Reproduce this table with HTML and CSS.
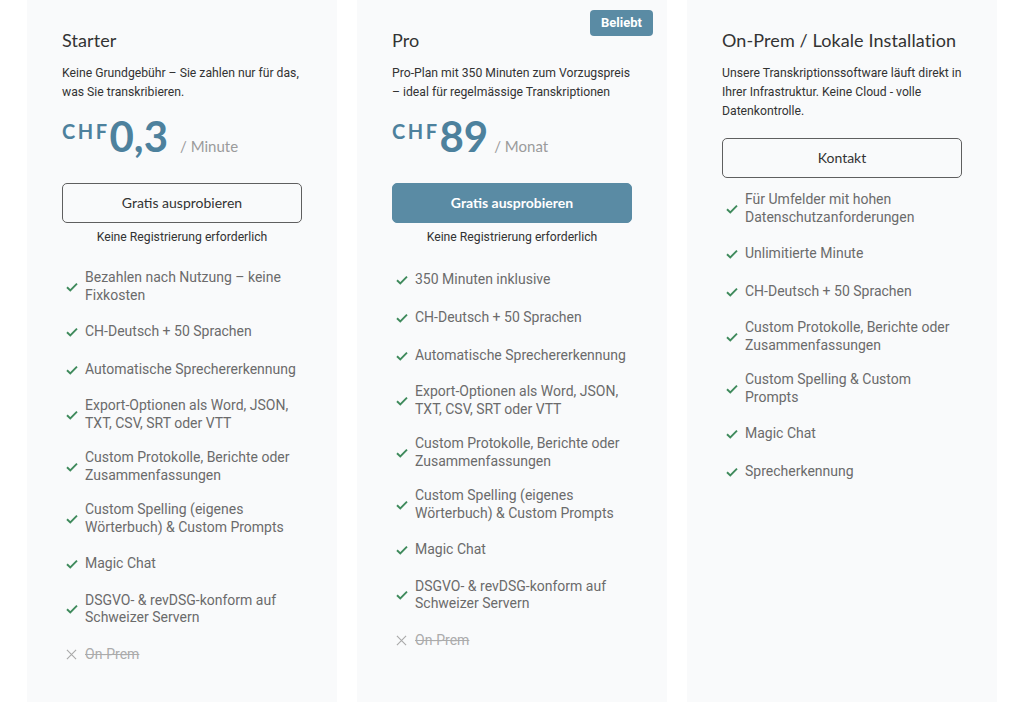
FILE: index.html
```html
<!DOCTYPE html>
<html lang="de">
<head>
<meta charset="utf-8">
<title>Preise</title>
<link rel="stylesheet" href="styles.css">
</head>
<body>
<div class="pricing">
  <section class="card">
    <h2 class="title">Starter</h2>
    <p class="desc">Keine Grundgebühr – Sie zahlen nur für das, was Sie transkribieren.</p>
    <div class="price"><span class="cur">CHF</span><span class="amount">0,3</span><span class="unit">/ Minute</span></div>
    <a class="btn">Gratis ausprobieren</a>
    <p class="note">Keine Registrierung erforderlich</p>
    <ul class="features">
      <li><span class="ico"><svg viewBox="0 0 12 10" width="12" height="10"><polyline points="1,5.2 4.3,8.4 11,1.6" fill="none" stroke="#3f8a5c" stroke-width="1.9"/></svg></span><span>Bezahlen nach Nutzung – keine Fixkosten</span></li>
      <li><span class="ico"><svg viewBox="0 0 12 10" width="12" height="10"><polyline points="1,5.2 4.3,8.4 11,1.6" fill="none" stroke="#3f8a5c" stroke-width="1.9"/></svg></span><span>CH-Deutsch + 50 Sprachen</span></li>
      <li><span class="ico"><svg viewBox="0 0 12 10" width="12" height="10"><polyline points="1,5.2 4.3,8.4 11,1.6" fill="none" stroke="#3f8a5c" stroke-width="1.9"/></svg></span><span>Automatische Sprechererkennung</span></li>
      <li><span class="ico"><svg viewBox="0 0 12 10" width="12" height="10"><polyline points="1,5.2 4.3,8.4 11,1.6" fill="none" stroke="#3f8a5c" stroke-width="1.9"/></svg></span><span>Export-Optionen als Word, JSON, TXT, CSV, SRT oder VTT</span></li>
      <li><span class="ico"><svg viewBox="0 0 12 10" width="12" height="10"><polyline points="1,5.2 4.3,8.4 11,1.6" fill="none" stroke="#3f8a5c" stroke-width="1.9"/></svg></span><span>Custom Protokolle, Berichte oder Zusammenfassungen</span></li>
      <li><span class="ico"><svg viewBox="0 0 12 10" width="12" height="10"><polyline points="1,5.2 4.3,8.4 11,1.6" fill="none" stroke="#3f8a5c" stroke-width="1.9"/></svg></span><span>Custom Spelling (eigenes Wörterbuch) &amp; Custom Prompts</span></li>
      <li><span class="ico"><svg viewBox="0 0 12 10" width="12" height="10"><polyline points="1,5.2 4.3,8.4 11,1.6" fill="none" stroke="#3f8a5c" stroke-width="1.9"/></svg></span><span>Magic Chat</span></li>
      <li><span class="ico"><svg viewBox="0 0 12 10" width="12" height="10"><polyline points="1,5.2 4.3,8.4 11,1.6" fill="none" stroke="#3f8a5c" stroke-width="1.9"/></svg></span><span>DSGVO- &amp; revDSG-konform auf Schweizer Servern</span></li>
      <li class="off"><span class="ico"><svg viewBox="0 0 12 12" width="11" height="11"><path d="M1 1L11 11M11 1L1 11" fill="none" stroke="#a9a9a9" stroke-width="1.2"/></svg></span><span>On-Prem</span></li>
    </ul>
  </section>

  <section class="card">
    <span class="badge">Beliebt</span>
    <h2 class="title">Pro</h2>
    <p class="desc">Pro-Plan mit 350 Minuten zum Vorzugspreis – ideal für regelmässige Transkriptionen</p>
    <div class="price"><span class="cur">CHF</span><span class="amount">89</span><span class="unit unit-tight">/ Monat</span></div>
    <a class="btn btn-primary">Gratis ausprobieren</a>
    <p class="note">Keine Registrierung erforderlich</p>
    <ul class="features">
      <li><span class="ico"><svg viewBox="0 0 12 10" width="12" height="10"><polyline points="1,5.2 4.3,8.4 11,1.6" fill="none" stroke="#3f8a5c" stroke-width="1.9"/></svg></span><span>350 Minuten inklusive</span></li>
      <li><span class="ico"><svg viewBox="0 0 12 10" width="12" height="10"><polyline points="1,5.2 4.3,8.4 11,1.6" fill="none" stroke="#3f8a5c" stroke-width="1.9"/></svg></span><span>CH-Deutsch + 50 Sprachen</span></li>
      <li><span class="ico"><svg viewBox="0 0 12 10" width="12" height="10"><polyline points="1,5.2 4.3,8.4 11,1.6" fill="none" stroke="#3f8a5c" stroke-width="1.9"/></svg></span><span>Automatische Sprechererkennung</span></li>
      <li><span class="ico"><svg viewBox="0 0 12 10" width="12" height="10"><polyline points="1,5.2 4.3,8.4 11,1.6" fill="none" stroke="#3f8a5c" stroke-width="1.9"/></svg></span><span>Export-Optionen als Word, JSON, TXT, CSV, SRT oder VTT</span></li>
      <li><span class="ico"><svg viewBox="0 0 12 10" width="12" height="10"><polyline points="1,5.2 4.3,8.4 11,1.6" fill="none" stroke="#3f8a5c" stroke-width="1.9"/></svg></span><span>Custom Protokolle, Berichte oder Zusammenfassungen</span></li>
      <li><span class="ico"><svg viewBox="0 0 12 10" width="12" height="10"><polyline points="1,5.2 4.3,8.4 11,1.6" fill="none" stroke="#3f8a5c" stroke-width="1.9"/></svg></span><span>Custom Spelling (eigenes Wörterbuch) &amp; Custom Prompts</span></li>
      <li><span class="ico"><svg viewBox="0 0 12 10" width="12" height="10"><polyline points="1,5.2 4.3,8.4 11,1.6" fill="none" stroke="#3f8a5c" stroke-width="1.9"/></svg></span><span>Magic Chat</span></li>
      <li><span class="ico"><svg viewBox="0 0 12 10" width="12" height="10"><polyline points="1,5.2 4.3,8.4 11,1.6" fill="none" stroke="#3f8a5c" stroke-width="1.9"/></svg></span><span>DSGVO- &amp; revDSG-konform auf Schweizer Servern</span></li>
      <li class="off"><span class="ico"><svg viewBox="0 0 12 12" width="11" height="11"><path d="M1 1L11 11M11 1L1 11" fill="none" stroke="#a9a9a9" stroke-width="1.2"/></svg></span><span>On-Prem</span></li>
    </ul>
  </section>

  <section class="card">
    <h2 class="title">On-Prem / Lokale Installation</h2>
    <p class="desc">Unsere Transkriptionssoftware läuft direkt in Ihrer Infrastruktur. Keine Cloud - volle Datenkontrolle.</p>
    <a class="btn btn-solo">Kontakt</a>
    <ul class="features features-solo">
      <li><span class="ico"><svg viewBox="0 0 12 10" width="12" height="10"><polyline points="1,5.2 4.3,8.4 11,1.6" fill="none" stroke="#3f8a5c" stroke-width="1.9"/></svg></span><span>Für Umfelder mit hohen Datenschutzanforderungen</span></li>
      <li><span class="ico"><svg viewBox="0 0 12 10" width="12" height="10"><polyline points="1,5.2 4.3,8.4 11,1.6" fill="none" stroke="#3f8a5c" stroke-width="1.9"/></svg></span><span>Unlimitierte Minute</span></li>
      <li><span class="ico"><svg viewBox="0 0 12 10" width="12" height="10"><polyline points="1,5.2 4.3,8.4 11,1.6" fill="none" stroke="#3f8a5c" stroke-width="1.9"/></svg></span><span>CH-Deutsch + 50 Sprachen</span></li>
      <li><span class="ico"><svg viewBox="0 0 12 10" width="12" height="10"><polyline points="1,5.2 4.3,8.4 11,1.6" fill="none" stroke="#3f8a5c" stroke-width="1.9"/></svg></span><span>Custom Protokolle, Berichte oder Zusammenfassungen</span></li>
      <li><span class="ico"><svg viewBox="0 0 12 10" width="12" height="10"><polyline points="1,5.2 4.3,8.4 11,1.6" fill="none" stroke="#3f8a5c" stroke-width="1.9"/></svg></span><span>Custom Spelling &amp; Custom Prompts</span></li>
      <li><span class="ico"><svg viewBox="0 0 12 10" width="12" height="10"><polyline points="1,5.2 4.3,8.4 11,1.6" fill="none" stroke="#3f8a5c" stroke-width="1.9"/></svg></span><span>Magic Chat</span></li>
      <li><span class="ico"><svg viewBox="0 0 12 10" width="12" height="10"><polyline points="1,5.2 4.3,8.4 11,1.6" fill="none" stroke="#3f8a5c" stroke-width="1.9"/></svg></span><span>Sprecherkennung</span></li>
    </ul>
  </section>
</div>
</body>
</html>
```

FILE: styles.css
```css
html, body {
  margin: 0;
  padding: 0;
  background: #ffffff;
}

body {
  font-family: "Roboto", "Liberation Sans", sans-serif;
  color: #333333;
  overflow: hidden;
}

.pricing {
  display: grid;
  grid-template-columns: repeat(3, 310px);
  column-gap: 20px;
  padding: 0 27px;
}

.card {
  position: relative;
  box-sizing: border-box;
  min-height: 702px;
  background: #f9fafb;
  padding: 27px 35px 40px;
  display: flex;
  flex-direction: column;
}

.badge {
  position: absolute;
  top: 10px;
  right: 14px;
  width: 63px;
  height: 26px;
  box-sizing: border-box;
  background: #5a8ba4;
  color: #ffffff;
  border-radius: 4px;
  font: 700 13px/26px "Roboto", sans-serif;
  text-align: center;
}

.title {
  margin: 0;
  font: 400 18px/26px "Lato", "Open Sans", sans-serif;
  color: #333333;
  letter-spacing: 0.1px;
  white-space: nowrap;
}

.desc {
  margin: 11px 0 0;
  font: 400 12.2px/19px "Roboto", sans-serif;
  color: #333333;
}

.price {
  margin-top: 14px;
  display: flex;
  align-items: baseline;
  font-family: "Lato", "Open Sans", sans-serif;
  color: #4d819d;
  height: 40px;
}

.cur {
  align-self: flex-start;
  font-size: 20px;
  line-height: 20px;
  font-weight: 700;
  margin-top: 5px;
  letter-spacing: 2.5px;
}

.amount {
  font-size: 42px;
  line-height: 40px;
  font-weight: 700;
}

.unit {
  margin-left: 12px;
  font-size: 15px;
  color: #9b9b9b;
  font-weight: 400;
}

.unit-tight {
  margin-left: 6px;
}

.btn {
  margin-top: 27px;
  box-sizing: border-box;
  height: 40px;
  display: flex;
  align-items: center;
  justify-content: center;
  border: 1px solid #5f5f5f;
  border-radius: 5px;
  font: 400 14px/1 "Lato", "Open Sans", sans-serif;
  color: #333333;
}

.btn-primary {
  background: #5a8ba4;
  border-color: #5a8ba4;
  color: #ffffff;
  font-weight: 700;
}

.btn-solo {
  margin-top: 17px;
}

.note {
  margin: 6px 0 0;
  font: 400 12.2px/16px "Roboto", sans-serif;
  color: #333333;
  text-align: center;
}

.features {
  list-style: none;
  margin: 24px 0 0;
  padding: 0;
  display: flex;
  flex-direction: column;
  row-gap: 17.1px;
}

.features-solo {
  margin-top: 13px;
}

.features li {
  display: flex;
  align-items: center;
  min-height: 21px;
  font: 400 14px/17.5px "Roboto", sans-serif;
  color: #6b6b6b;
}

.ico {
  flex: 0 0 23px;
  display: flex;
  align-items: center;
  padding-left: 4px;
  box-sizing: border-box;
}

.features li.off {
  color: #ababab;
  text-decoration: line-through;
}
```
